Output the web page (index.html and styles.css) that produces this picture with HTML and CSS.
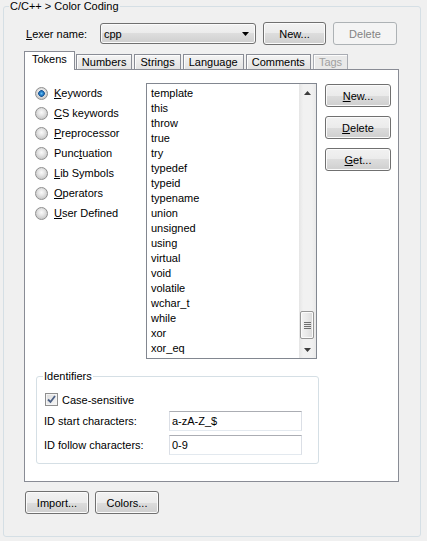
FILE: index.html
```html
<!DOCTYPE html>
<html lang="en">
<head>
	<meta charset="UTF-8">
	<meta name="viewport" content="width=device-width, initial-scale=1.0">
	<title>Color Coding</title>
	<link rel="stylesheet" href="styles.css">
</head>
<body>
	<fieldset class="page">
		<legend>C/C++ &gt; Color Coding</legend>
		<div class="page-body">
			<div class="lexer-row">
				<label class="lexer-label"><u>L</u>exer name:</label>
				<div class="combo">
					<span>cpp</span>
					<svg class="combo-arrow" width="7" height="4" viewBox="0 0 7 4"><path d="M0 0H7L3.5 4Z" fill="#000"/></svg>
				</div>
				<button class="btn btn-top">New...</button>
				<button class="btn btn-top" disabled>Delete</button>
			</div>

			<div class="tabs">
				<div class="tab active">Tokens</div>
				<div class="tab">Numbers</div>
				<div class="tab">Strings</div>
				<div class="tab">Language</div>
				<div class="tab">Comments</div>
				<div class="tab disabled">Tags</div>
			</div>

			<div class="tab-panel">
				<div class="tokens">
					<div class="kinds">
						<label class="kind"><span class="radio checked"></span><span><u>K</u>eywords</span></label>
						<label class="kind"><span class="radio"></span><span><u>C</u>S keywords</span></label>
						<label class="kind"><span class="radio"></span><span><u>P</u>reprocessor</span></label>
						<label class="kind"><span class="radio"></span><span>Punc<u>t</u>uation</span></label>
						<label class="kind"><span class="radio"></span><span><u>L</u>ib Symbols</span></label>
						<label class="kind"><span class="radio"></span><span><u>O</u>perators</span></label>
						<label class="kind"><span class="radio"></span><span><u>U</u>ser Defined</span></label>
					</div>

					<div class="listbox">
						<ul class="items">
							<li>template</li>
							<li>this</li>
							<li>throw</li>
							<li>true</li>
							<li>try</li>
							<li>typedef</li>
							<li>typeid</li>
							<li>typename</li>
							<li>union</li>
							<li>unsigned</li>
							<li>using</li>
							<li>virtual</li>
							<li>void</li>
							<li>volatile</li>
							<li>wchar_t</li>
							<li>while</li>
							<li>xor</li>
							<li>xor_eq</li>
						</ul>
						<div class="vscroll">
							<div class="arrow">
								<svg width="7" height="4" viewBox="0 0 7 4"><path d="M3.5 0L7 4H0Z" fill="#3c3c3c"/></svg>
							</div>
							<div class="track">
								<div class="thumb">
									<svg width="7" height="7" viewBox="0 0 7 7"><path d="M0 0.5H7M0 2.5H7M0 4.5H7M0 6.5H7" stroke="#6f6f6f" stroke-width="1"/></svg>
								</div>
							</div>
							<div class="arrow">
								<svg width="7" height="4" viewBox="0 0 7 4"><path d="M0 0H7L3.5 4Z" fill="#3c3c3c"/></svg>
							</div>
						</div>
					</div>

					<div class="side-btns">
						<button class="btn btn-side"><u>N</u>ew...</button>
						<button class="btn btn-side"><u>D</u>elete</button>
						<button class="btn btn-side"><u>G</u>et...</button>
					</div>
				</div>

				<fieldset class="ident">
					<legend>Identifiers</legend>
					<div class="ident-body">
						<label class="check-row">
							<span class="checkbox">
								<svg width="9" height="9" viewBox="0 0 9 9"><path d="M1 4.5L3.5 7L8 1" fill="none" stroke="#4d6185" stroke-width="1.8"/></svg>
							</span>
							<span>Case-sensitive</span>
						</label>
						<div class="field-row">
							<span class="field-label">ID start characters:</span>
							<input class="text-input" type="text" value="a-zA-Z_$">
						</div>
						<div class="field-row">
							<span class="field-label">ID follow characters:</span>
							<input class="text-input" type="text" value="0-9">
						</div>
					</div>
				</fieldset>
			</div>

			<div class="bottom-btns">
				<button class="btn btn-bottom">Import...</button>
				<button class="btn btn-bottom">Colors...</button>
			</div>
		</div>
	</fieldset>
</body>
</html>
```

FILE: styles.css
```css
* {
	box-sizing: border-box;
}

body {
	margin: 0;
	padding: 0 0 0 3px;
	background-color: #f0f0f0;
	font-family: "Liberation Sans", Arial, sans-serif;
	font-size: 11px;
	color: #000;
}

u {
	text-decoration: underline;
	text-underline-offset: 1px;
}

.page {
	width: 418px;
	margin: 0;
	padding: 0;
	border: 1px solid #d5dfe5;
	border-radius: 3px;
}

.page > legend {
	margin-left: 5px;
	padding: 0 1px;
	line-height: 13px;
}

.page-body {
	padding: 9px 20px 22px 20px;
}

.lexer-row {
	display: flex;
	align-items: center;
	height: 23px;
}

.lexer-label {
	width: 74px;
	margin-left: 2px;
}

.combo {
	display: flex;
	align-items: center;
	justify-content: space-between;
	width: 156px;
	height: 21px;
	padding: 0 6px 0 3px;
	border: 1px solid #707070;
	border-radius: 3px;
	background: linear-gradient(#f2f2f2 0%, #ebebeb 50%, #dddddd 50%, #cfcfcf 100%);
	box-shadow: inset 0 0 0 1px #fbfbfb;
}

.btn {
	height: 23px;
	padding: 0;
	border: 1px solid #707070;
	border-radius: 3px;
	background: linear-gradient(#f2f2f2 0%, #ebebeb 50%, #dddddd 50%, #cfcfcf 100%);
	box-shadow: inset 0 0 0 1px #fbfbfb;
	font-family: inherit;
	font-size: 11px;
	color: #000;
}

.btn:disabled {
	border-color: #adb2b5;
	background: #f4f4f4;
	box-shadow: none;
	color: #838383;
}

.btn-top {
	width: 63px;
	margin-left: 7px;
}

.btn-top:disabled {
	width: 64px;
}

.tabs {
	display: flex;
	align-items: flex-end;
	margin-top: 6px;
	position: relative;
	z-index: 1;
}

.tab {
	height: 15px;
	margin-right: 2px;
	padding: 0 5px;
	border: 1px solid #898c95;
	border-bottom: none;
	background: linear-gradient(#f4f4f4, #e2e2e2);
	box-shadow: inset 1px 1px 0 #fcfcfc;
	line-height: 14px;
}

.tab.active {
	height: 19px;
	margin-bottom: -1px;
	margin-right: 1px;
	padding: 0 7px 0 7px;
	background: #fff;
	box-shadow: none;
	line-height: 15px;
}

.tab.disabled {
	color: #a0a0a0;
	border-color: #a9acb3;
	background: #e9e9e9;
}

.tab-panel {
	width: 375px;
	padding: 13px 0 17px 10px;
	border: 1px solid #898c95;
	background: #fff;
}

.tokens {
	display: flex;
	align-items: flex-start;
}

.kinds {
	display: flex;
	flex-direction: column;
	width: 111px;
}

.kind {
	display: flex;
	align-items: center;
	height: 20px;
}

.radio {
	width: 13px;
	height: 13px;
	margin-right: 6px;
	border: 1px solid #8f8f8f;
	border-radius: 50%;
	background: radial-gradient(circle at 50% 40%, #fafafa 0, #e6e6e6 3px, #cdcdcd 6px);
}

.radio.checked {
	background:
		radial-gradient(circle at 50% 50%, #6cc2f3 0, #2a86d1 1.6px, #1a5695 3px, transparent 3.6px),
		radial-gradient(circle at 50% 40%, #fafafa 0, #e6e6e6 3px, #cdcdcd 6px);
}

.listbox {
	display: flex;
	width: 171px;
	height: 276px;
	border: 1px solid #828790;
	background: #fff;
}

.items {
	flex: 1;
	margin: 0;
	padding: 2px 0 0 4px;
	list-style: none;
	line-height: 15px;
}

.vscroll {
	display: flex;
	flex-direction: column;
	width: 17px;
	background: linear-gradient(90deg, #e5e5e5, #f1f1f1 25%, #f1f1f1 75%, #e9e9e9);
}

.arrow {
	display: flex;
	align-items: center;
	justify-content: center;
	height: 17px;
}

.track {
	flex: 1;
	display: flex;
	flex-direction: column;
	justify-content: flex-end;
	padding: 0 2px 2px 1px;
}

.thumb {
	display: flex;
	align-items: center;
	justify-content: center;
	height: 28px;
	border: 1px solid #979797;
	border-radius: 2px;
	background: linear-gradient(90deg, #f3f3f3, #e9e9e9 50%, #d9d9d9);
	box-shadow: inset 0 0 0 1px #fbfbfb;
}

.side-btns {
	display: flex;
	flex-direction: column;
	gap: 9px;
	margin: 1px 0 0 8px;
}

.btn-side {
	width: 66px;
}

.ident {
	width: 283px;
	margin: 11px 0 0 1px;
	padding: 0;
	border: 1px solid #d5dfe5;
	border-radius: 3px;
}

.ident > legend {
	margin-left: 6px;
	padding: 0 1px;
	line-height: 13px;
}

.ident-body {
	padding: 10px 0 8px 7px;
}

.check-row {
	display: flex;
	align-items: center;
	height: 13px;
}

.checkbox {
	display: flex;
	align-items: center;
	justify-content: center;
	width: 13px;
	height: 13px;
	margin: 0 4px 0 1px;
	border: 1px solid #8f8f8f;
	background: linear-gradient(135deg, #dcdcdc, #f7f7f7);
	box-shadow: inset 0 0 0 1px #f4f4f4;
}

.field-row {
	display: flex;
	align-items: center;
	margin-top: 5px;
}

.field-row + .field-row {
	margin-top: 4px;
}

.field-label {
	width: 125px;
}

.text-input {
	width: 133px;
	height: 20px;
	margin: 0;
	padding: 0 2px;
	border: 1px solid #abadb3;
	border-left-color: #dbdfe6;
	border-right-color: #dbdfe6;
	border-bottom-color: #e3e9ef;
	font-family: inherit;
	font-size: 11px;
	color: #000;
	outline: none;
}

.bottom-btns {
	display: flex;
	gap: 6px;
	margin: 9px 0 0 1px;
}

.btn-bottom {
	width: 64px;
}
```
